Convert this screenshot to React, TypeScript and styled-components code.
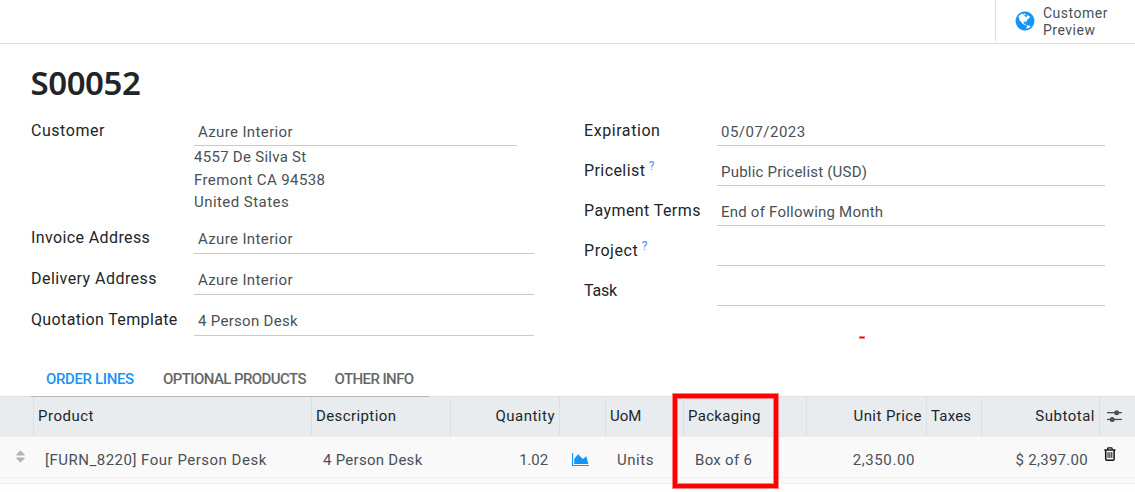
import React from 'react';
import styled, { createGlobalStyle } from 'styled-components';

const GlobalStyle = createGlobalStyle`
  * { box-sizing: border-box; }
  body { margin: 0; background: #fff; color: #495057; font: 15px/24px Roboto, "Liberation Sans", sans-serif; overflow: hidden; }
  svg { display: block; }
`;

const Page = styled.div`
  position: relative;
  width: 1135px;
  height: 492px;
  overflow: hidden;
  display: flex;
  flex-direction: column;
`;

const ButtonBar = styled.header`
  display: flex;
  justify-content: flex-end;
  height: 44px;
  flex: none;
  border-bottom: 1px solid #dee2e6;
`;

const StatButton = styled.button`
  display: flex;
  align-items: center;
  gap: 7px;
  width: 140px;
  padding: 0 0 0 18px;
  border: 0;
  border-left: 1px solid #dee2e6;
  border-bottom-left-radius: 2px;
  background: none;
  color: #495057;
  font: 14px/17px Roboto, "Liberation Sans", sans-serif;
  text-align: left;
`;

const GlobeBox = styled.span`
  margin-top: -1px;
`;

const StatLabel = styled.span`
  display: flex;
  flex-direction: column;
`;

const Text = styled.span<{ $track?: number }>`
  letter-spacing: ${(p) => p.$track ?? 0.5}px;
  white-space: nowrap;
`;

const Title = styled.h1`
  margin: 17px 0 0 30.5px;
  height: 58px;
  flex: none;
  color: #212529;
  font: 600 33px/44px "Noto Sans", sans-serif;
  letter-spacing: -0.45px;
`;

const Groups = styled.div`
  display: flex;
  height: 243px;
  flex: none;
  padding-left: 31px;
  gap: 50px;
`;

const Group = styled.div<{ $width: number; $label: number }>`
  width: ${(p) => p.$width}px;
  --label: ${(p) => p.$label}px;
  display: flex;
  flex-direction: column;
  gap: 13px;
`;

const FieldRow = styled.div`
  display: grid;
  grid-template-columns: var(--label) 1fr;
`;

const FieldLabel = styled.label`
  color: #212529;
  font-size: 16px;
`;

const Help = styled.sup`
  margin-left: 3.5px;
  color: #3f93f0;
  font-size: 12px;
  line-height: 0;
  vertical-align: 6px;
`;

const FieldValue = styled.div<{ $height?: number; $inset?: number }>`
  height: ${(p) => p.$height ?? 27}px;
  margin-right: ${(p) => p.$inset ?? 0}px;
  padding: 1px 0 0 4px;
  border-bottom: 1px solid #c9cacb;
`;

const AddressLines = styled.div`
  display: flex;
  flex-direction: column;
  height: 67px;
  line-height: 22.5px;
`;

const Tabs = styled.nav`
  display: flex;
  align-self: flex-start;
  position: relative;
  z-index: 1;
  height: 35px;
  flex: none;
  width: 398px;
  margin: 0 0 -1px 31px;
  padding-left: 15px;
  border-bottom: 1px solid #b5b5b5;
`;

const Tab = styled.a<{ $width: number; $active?: boolean }>`
  width: ${(p) => p.$width}px;
  padding-top: 5px;
  color: ${(p) => (p.$active ? '#1a93f5' : '#666')};
  font-weight: 500;
  text-transform: uppercase;
`;

const TableRow = styled.div`
  display: grid;
  flex: none;
  grid-template-columns: 34px 278px 139px 109px 46px 78px 123px 120px 55px 118px 35px;
`;

const HeadRow = styled(TableRow)`
  height: 41px;
  border-top: 1px solid #dee2e6;
  border-bottom: 1px solid #e8ecef;
  background: #e8ecef;
  color: #212529;
`;

const HeadCell = styled.div<{ $right?: boolean }>`
  padding: 7px 4px 0;
  border-right: 1px solid #dce0e4;
  text-align: ${(p) => (p.$right ? 'right' : 'left')};
  &:last-child { border-right: 0; padding: 13px 0 0 7px; }
`;

const BodyRow = styled(TableRow)`
  height: 41px;
  background: #f9f9f9;
  border-bottom: 1px solid #eeefef;
`;

const BodyCell = styled.div<{ $right?: boolean }>`
  padding: 11px 12px 0 11px;
  text-align: ${(p) => (p.$right ? 'right' : 'left')};
`;

const IconCell = styled.div<{ $left: number; $top: number }>`
  padding: ${(p) => p.$top}px 0 0 ${(p) => p.$left}px;
`;

const Spacer = styled.div`
  height: 6px;
  flex: none;
  background: #f9f9f9;
  border-bottom: 1px solid #eeefef;
`;

const Rest = styled.div`
  flex: 1;
  background: #fdfdfd;
`;

const Highlight = styled.div`
  position: absolute;
  left: 672px;
  top: 393px;
  width: 107px;
  height: 96px;
  border: 1px solid #ff8080;
  &::before {
    content: '';
    position: absolute;
    inset: 0;
    border: 4px solid #f00;
  }
  &::after {
    content: '';
    position: absolute;
    inset: 4px;
    border: 1px solid #ff8080;
  }
`;

const Mark = styled.div`
  position: absolute;
  left: 859px;
  top: 336px;
  width: 6px;
  height: 3px;
  background: #d00;
  border: 1px solid #ff8080;
`;

const GlobeIcon = () => (
  <svg width="22" height="22" viewBox="0 0 1792 1792" fill="#1296f7">
    <path d="M896 128q209 0 385.5 103t279.5 279.5 103 385.5-103 385.5-279.5 279.5-385.5 103-385.5-103-279.5-279.5-103-385.5 103-385.5 279.5-279.5 385.5-103zm274 521q-2 1-9.5 9.5t-13.5 9.5q2 0 4.5-5t5-11 3.5-7q6-7 22-15 14-6 52-12 34-8 51 11-2-2 9.5-13t14.5-12q3-2 15-4.5t15-7.5l2-22q-12 1-17.5-7t-6.5-21q0 2-6 8 0-7-4.5-8t-11.5 1-9 1q-10-3-15-7.5t-8-16.5-4-15q-2-5-9.5-11t-9.5-10q-1-2-2.5-5.5t-3-6.5-4-5.5-5.5-2.5-7 5-7.5 10-4.5 5q-3-2-6-1.5t-4.5 1-4.5 3-5 3.5q-3 2-8.5 3t-8.5 2q15-5-1-11-10-4-16-3 9-4 7.5-12t-8.5-14h5q-1-4-8.5-8.5t-17.5-8.5-13-6q-8-5-34-9.5t-33-.5q-5 6-4.5 10.5t4 14 3.5 12.5q1 6-5.5 13t-6.5 12q0 7 14 15.5t10 21.5q-3 8-16 16t-16 12q-5 8-1.5 18.5t10.5 16.5q2 2 1.5 4t-3.5 4.5-5.5 4-6.5 3.5l-3 2q-11 5-20.5-6t-13.5-26q-7-25-16-30-23-8-29 1-5-13-41-26-25-9-58-4 6-1 0-15-7-15-19-12 3-6 4-17.5t1-13.5q3-13 12-23 1-1 7-8.5t9.5-13.5.5-6q35 4 50-11 5-5 11.5-17t10.5-17q9-6 14-5.5t14.5 5.5 14.5 5q14 1 15.5-11t-7.5-20q12 1 3-17-4-7-8-9-12-4-27 5-8 4 2 8-1-1-9.5 10.5t-16.5 17.5-16-5q-1-1-5.5-13.5t-9.5-13.5q-8 0-16 15 3-8-11-15t-24-8q19-12-8-27-7-4-20.5-5t-19.5 4q-5 7-5.5 11.5t5 8 10.5 5.5 11.5 4 8.5 3q14 10 8 14-2 1-8.5 3.5t-11.5 4.5-6 4q-3 4 0 14t-2 14q-5-5-9-17.5t-7-16.5q7 9-25 6l-10-1q-4 0-16 2t-20.5 1-13.5-8q-4-8 0-20 1-4 4-2-4-3-11-9.5t-10-8.5q-46 15-94 41 6 1 12-1 5-2 13-6.5t10-5.5q34-14 42-7l5-5q14 16 20 25-7-4-30-1-20 6-22 12 7 12 5 18-4-3-11.5-10t-14.5-11-15-5q-16 0-22 1-146 80-235 222 7 7 12 8 4 1 5 9t2.5 11 11.5-3q9 8 3 19 1-1 44 27 19 17 21 21 3 11-10 18-1-2-9-9t-9-4q-3 5 .5 18.5t10.5 12.5q-7 0-9.5 16t-2.5 35.5-1 23.5l2 1q-3 12 5.5 34.5t21.5 19.5q-13 3 20 43 6 8 8 9 3 2 12 7.5t15 10 10 10.5q4 5 10 22.5t14 23.5q-2 6 9.5 20t10.5 23q-1 0-2.5 1t-2.5 1q3 7 15.5 14t15.5 13q1 3 2 10t3 11 8 2q2-20-24-62-15-25-17-29-3-5-5.5-15.5t-4.5-14.5q2 0 6 1.5t8.5 3.5 7.5 4 2 3q-3 7 2 17.5t12 18.5 17 19 12 13q6 6 14 19.5t0 13.5q9 0 20 10.5t17 19.5q5 8 8 26t5 24q2 7 8.5 13.5t12.5 9.5l16 8 13 7q5 2 18.5 10.5t21.5 11.5q10 4 16 4t14.5-2.5 13.5-3.5q15-2 29 15t21 21q36 19 55 11-2 1 .5 7.5t8 15.5 9 14.5 5.5 8.5q5 6 18 15t18 15q6-4 7-9-3 8 7 20t18 10q14-3 14-32-31 15-49-18 0-1-2.5-5.5t-4-8.5-2.5-8.5 0-7.5 5-3q9 0 10-3.5t-2-12.5-4-13q-1-8-11-20t-12-15q-5 9-16 8t-16-9q0 1-1.5 5.5t-1.5 6.5q-13 0-15-1 1-3 2.5-17.5t3.5-22.5q1-4 5.5-12t7.5-14.5 4-12.5-4.5-9.5-17.5-2.5q-19 1-26 20-1 3-3 10.5t-5 11.5-9 7q-7 3-24 2t-24-5q-13-8-22.5-29t-9.5-37q0-10 2.5-26.5t3-25-5.5-24.5q3-2 9-9.5t10-10.5q2-1 4.5-1.5t4.5 0 4-1.5 3-6q-1-1-4-3-3-3-4-3 7 3 28.5-1.5t27.5 1.5q15 11 22-2 0-1-2.5-9.5t-.5-13.5q5 27 29 9 3 3 15.5 5t17.5 5q3 2 7 5.5t5.5 4.5 5-.5 8.5-6.5q10 14 12 24 11 40 19 44 7 3 11 2t4.5-9.5 0-14-1.5-12.5l-1-8v-18l-1-8q-15-3-18.5-12t1.5-18.5 15-18.5q1-1 8-3.5t15.5-6.5 12.5-8q21-19 15-35 7 0 11-9-1 0-5-3t-7.5-5-4.5-2q9-5 2-16 5-3 7.5-11t7.5-10q9 12 21 2 8-8 1-16 5-7 20.5-10.5t18.5-9.5q7 2 8-2t1-12 3-12q4-5 15-9t13-5l17-11q3-4 0-4 18 2 31-11 10-11-6-20 3-6-3-9.5t-15-5.5q3-1 11.5-.5t10.5-1.5q15-10-7-16-17-5-43 12zm-163 877q206-36 351-189-3-3-12.5-4.5t-12.5-3.5q-18-7-24-8 1-7-2.5-13t-8-9-12.5-8-11-7q-2-2-7-6t-7-5.5-7.5-4.5-8.5-2-10 1l-3 1q-3 1-5.5 2.5t-5.5 3-4 3 0 2.5q-21-17-36-22-5-1-11-5.5t-10.5-7-10-1.5-11.5 7q-5 5-6 15t-2 13q-7-5 0-17.5t2-18.5q-3-6-10.5-4.5t-12 4.5-11.5 8.5-9 6.5-8.5 5.5-8.5 7.5q-3 4-6 12t-5 11q-2-4-11.5-6.5t-9.5-5.5q2 10 4 35t5 38q7 31-12 48-27 25-29 40-4 22 12 26 0 7-8 20.5t-7 21.5q0 6 2 16z" />
  </svg>
);

const AreaChartIcon = () => (
  <svg width="17.5" height="13.2" viewBox="0 0 2048 1536" fill="#1296f7">
    <path d="M2048 1408v128h-2048v-1536h128v1408h1920zm-384-1024l256 896h-1664v-576l448-576 576 576z" />
  </svg>
);

const SortIcon = () => (
  <svg width="15" height="15" viewBox="0 0 1792 1792" fill="#adb5bd">
    <path d="M1408 1088q0 26-19 45l-448 448q-19 19-45 19t-45-19l-448-448q-19-19-19-45t19-45 45-19h896q26 0 45 19t19 45zm0-384q0 26-19 45t-45 19h-896q-26 0-45-19t-19-45 19-45l448-448q19-19 45-19t45 19l448 448q19 19 19 45z" />
  </svg>
);

const SlidersIcon = () => (
  <svg width="15" height="13" viewBox="0 0 15 13" fill="#495057">
    <rect x="0" y="2" width="15" height="1.3" />
    <rect x="0" y="8.8" width="15" height="1.3" />
    <circle cx="9.7" cy="2.7" r="2.5" />
    <circle cx="5.2" cy="9.4" r="2.5" />
  </svg>
);

const TrashIcon = () => (
  <svg width="12" height="14" viewBox="0 0 12 14" fill="none" stroke="#101315">
    <path d="M0.3 3h11.2" strokeWidth="1.4" />
    <path d="M3.7 2.7V1.6q0-.8.8-.8h2.8q.8 0 .8.8v1.1" strokeWidth="1.3" />
    <path d="M1.7 3v8.9q0 1.3 1.2 1.3h6q1.2 0 1.2-1.3V3" strokeWidth="1.5" />
    <path d="M4 5.2v5.7M5.9 5.2v5.7M7.8 5.2v5.7" strokeWidth="1" />
  </svg>
);

type Field = { label: string; lt: number; value?: string; vt?: number; help?: boolean };

const addressFields: Field[] = [
  { label: 'Invoice Address', lt: 0.39, value: 'Azure Interior', vt: 0.37 },
  { label: 'Delivery Address', lt: 0.45, value: 'Azure Interior', vt: 0.37 },
  { label: 'Quotation Template', lt: 0.36, value: '4 Person Desk', vt: 0.3 },
];

const termFields: Field[] = [
  { label: 'Expiration', lt: 0.57, value: '05/07/2023', vt: 0.48 },
  { label: 'Pricelist', lt: 0.42, value: 'Public Pricelist (USD)', vt: 0.21, help: true },
  { label: 'Payment Terms', lt: 0.42, value: 'End of Following Month', vt: 0.22 },
  { label: 'Project', lt: 0.54, help: true },
  { label: 'Task', lt: -0.2 },
];

const FieldLine = ({ field, height }: { field: Field; height?: number }) => (
  <FieldRow>
    <FieldLabel>
      <Text $track={field.lt}>{field.label}</Text>
      {field.help && <Help>?</Help>}
    </FieldLabel>
    <FieldValue $height={height}>
      <Text $track={field.vt}>{field.value}</Text>
    </FieldValue>
  </FieldRow>
);

export default function App() {
  return (
    <Page>
      <GlobalStyle />
      <ButtonBar>
        <StatButton>
          <GlobeBox><GlobeIcon /></GlobeBox>
          <StatLabel>
            <Text $track={0.5}>Customer</Text>
            <Text $track={0.5}>Preview</Text>
          </StatLabel>
        </StatButton>
      </ButtonBar>
      <Title>S00052</Title>
      <Groups>
        <Group $width={503} $label={163}>
          <FieldRow>
            <FieldLabel><Text $track={0.54}>Customer</Text></FieldLabel>
            <div>
              <FieldValue $inset={17}><Text $track={0.37}>Azure Interior</Text></FieldValue>
              <AddressLines>
                <Text $track={0.28}>4557 De Silva St</Text>
                <Text $track={0.4}>Fremont CA 94538</Text>
                <Text $track={0.45}>United States</Text>
              </AddressLines>
            </div>
          </FieldRow>
          {addressFields.map((f) => <FieldLine key={f.label} field={f} height={28} />)}
        </Group>
        <Group $width={521} $label={133}>
          {termFields.map((f) => <FieldLine key={f.label} field={f} />)}
        </Group>
      </Groups>
      <Tabs>
        <Tab $width={117} $active><Text $track={-0.36}>Order Lines</Text></Tab>
        <Tab $width={171.5}><Text $track={-0.58}>Optional Products</Text></Tab>
        <Tab $width={94}><Text $track={-0.58}>Other Info</Text></Tab>
      </Tabs>
      <HeadRow>
        <HeadCell />
        <HeadCell><Text $track={0.5}>Product</Text></HeadCell>
        <HeadCell><Text $track={0.4}>Description</Text></HeadCell>
        <HeadCell $right><Text $track={0.5}>Quantity</Text></HeadCell>
        <HeadCell />
        <HeadCell><Text $track={0}>UoM</Text></HeadCell>
        <HeadCell><Text $track={0.3}>Packaging</Text></HeadCell>
        <HeadCell $right><Text $track={0.42}>Unit Price</Text></HeadCell>
        <HeadCell><Text $track={0.2}>Taxes</Text></HeadCell>
        <HeadCell $right><Text $track={0.5}>Subtotal</Text></HeadCell>
        <HeadCell><SlidersIcon /></HeadCell>
      </HeadRow>
      <BodyRow>
        <IconCell $left={12.5} $top={12}><SortIcon /></IconCell>
        <BodyCell><Text $track={0.5}>[FURN_8220] Four Person Desk</Text></BodyCell>
        <BodyCell><Text $track={0.27}>4 Person Desk</Text></BodyCell>
        <BodyCell $right><Text $track={-0.1}>1.02</Text></BodyCell>
        <IconCell $left={11.5} $top={16}><AreaChartIcon /></IconCell>
        <BodyCell><Text $track={0.55}>Units</Text></BodyCell>
        <BodyCell><Text $track={0.3}>Box of 6</Text></BodyCell>
        <BodyCell $right><Text $track={0.6}>2,350.00</Text></BodyCell>
        <BodyCell />
        <BodyCell $right><Text $track={0.28}>$ 2,397.00</Text></BodyCell>
        <IconCell $left={4} $top={10}><TrashIcon /></IconCell>
      </BodyRow>
      <Spacer />
      <Rest />
      <Mark />
      <Highlight />
    </Page>
  );
}
